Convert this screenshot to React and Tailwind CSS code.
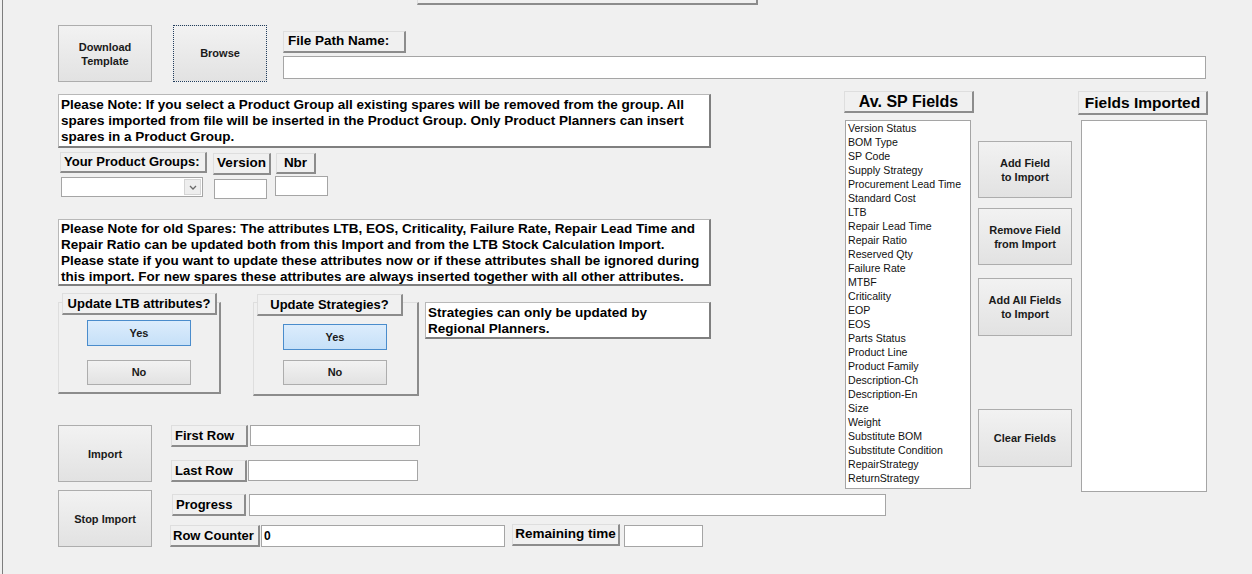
import React from "react";

const spFields = [
  "Version Status",
  "BOM Type",
  "SP Code",
  "Supply Strategy",
  "Procurement Lead Time",
  "Standard Cost",
  "LTB",
  "Repair Lead Time",
  "Repair Ratio",
  "Reserved Qty",
  "Failure Rate",
  "MTBF",
  "Criticality",
  "EOP",
  "EOS",
  "Parts Status",
  "Product Line",
  "Product Family",
  "Description-Ch",
  "Description-En",
  "Size",
  "Weight",
  "Substitute BOM",
  "Substitute Condition",
  "RepairStrategy",
  "ReturnStrategy",
];

// raised Access-style label
function Label({ className = "", children }) {
  return (
    <div
      className={`flex items-center shrink-0 bg-[#f0f0f0] border-t border-l border-r-2 border-b-2 border-t-[#dedede] border-l-[#dedede] border-r-[#8c8c8c] border-b-[#8c8c8c] font-bold text-black whitespace-nowrap ${className}`}
    >
      {children}
    </div>
  );
}

function Btn({ className = "", children }) {
  return (
    <button
      type="button"
      className={`flex items-center justify-center shrink-0 text-center border border-[#adadad] bg-linear-to-b from-[#f2f2f2] to-[#e2e2e2] text-[11px] font-bold leading-[14px] text-[#1a1a1a] ${className}`}
    >
      {children}
    </button>
  );
}

function ChoiceBtn({ active, className = "", children }) {
  return (
    <button
      type="button"
      className={`flex items-center justify-center shrink-0 text-[11px] font-bold text-[#1a1a1a] border ${
        active
          ? "border-[#4a8ccc] bg-linear-to-b from-[#dcecfc] to-[#c6e0f8]"
          : "border-[#adadad] bg-linear-to-b from-[#f2f2f2] to-[#e2e2e2]"
      } ${className}`}
    >
      {children}
    </button>
  );
}

function Box({ className = "", children }) {
  return (
    <div className={`shrink-0 bg-white border border-[#a5a5a5] ${className}`}>
      {children}
    </div>
  );
}

function Note({ className = "", children }) {
  return (
    <div
      className={`shrink-0 bg-white border-t border-l border-r-2 border-b-2 border-t-[#b8b8b8] border-l-[#b8b8b8] border-r-[#7f7f7f] border-b-[#7f7f7f] pl-[2px] text-[13.5px] font-bold leading-[16px] text-black whitespace-nowrap ${className}`}
    >
      {children}
    </div>
  );
}

export default function App() {
  return (
    <div className="w-[1252px] h-[574px] overflow-hidden bg-[#f0f0f0] pl-[2px] font-['Liberation_Sans',Arial,sans-serif] text-black">
      <div className="h-full border-l border-[#7d7d7d]">
        {/* top strip */}
        <div className="ml-[414px] w-[341px] h-[5px] border-l border-r-2 border-b-2 border-l-[#dedede] border-r-[#8c8c8c] border-b-[#8c8c8c]" />

        {/* Row 1 */}
        <div className="flex items-start mt-[20px]">
          <Btn className="ml-[55px] w-[94px] h-[57px]">
            Download
            <br />
            Template
          </Btn>
          <button
            type="button"
            className="ml-[21px] w-[94px] h-[57px] shrink-0 flex items-center justify-center border border-dotted border-[#203c5c] bg-linear-to-b from-[#f2f2f2] to-[#e2e2e2] text-[11px] font-bold text-[#1a1a1a]"
          >
            Browse
          </button>
          <div className="ml-[16px] flex flex-col">
            <Label className="mt-[6px] w-[123px] h-[22px] pl-[4px] text-[13.5px]">File Path Name:</Label>
            <Box className="mt-[3px] w-[923px] h-[23px]" />
          </div>
        </div>

        {/* Main */}
        <div className="flex items-start mt-[9px]">
          {/* Left column */}
          <div className="ml-[55px] w-[653px] shrink-0 flex flex-col">
            <Note className="mt-[3px] h-[54px] pt-[2px]">
              Please Note: If you select a Product Group all existing spares will be removed from the group. All
              <br />
              spares imported from file will be inserted in the Product Group. Only Product Planners can insert
              <br />
              spares in a Product Group.
            </Note>

            {/* product group row */}
            <div className="flex items-start mt-[4px]">
              <div className="ml-[2px] flex flex-col">
                <Label className="w-[147px] h-[21px] pl-[3px] text-[13px]">Your Product Groups:</Label>
                <Box className="mt-[4px] ml-[1px] w-[142px] h-[20px] flex justify-end items-center pr-[1px]">
                  <div className="w-[17px] h-[16px] flex items-center justify-center bg-[#eeeeee] border border-[#d4d4d4]">
                    <svg width="8" height="5" viewBox="0 0 8 5">
                      <path d="M1 1 L4 4 L7 1" fill="none" stroke="#6a6a6a" strokeWidth="1.3" />
                    </svg>
                  </div>
                </Box>
              </div>
              <div className="ml-[6px] mt-[1px] flex flex-col">
                <Label className="w-[58px] h-[22px] justify-center text-[13.5px]">Version</Label>
                <Box className="mt-[4px] ml-[1px] w-[53px] h-[20px]" />
              </div>
              <div className="ml-[5px] mt-[1px] flex flex-col">
                <Label className="w-[40px] h-[21px] justify-center text-[13.5px]">Nbr</Label>
                <Box className="mt-[2px] -ml-[1px] w-[53px] h-[20px]" />
              </div>
            </div>

            <Note className="mt-[20px] h-[67px] pt-[1px]">
              Please Note for old Spares: The attributes LTB, EOS, Criticality, Failure Rate, Repair Lead Time and
              <br />
              Repair Ratio can be updated both from this Import and from the LTB Stock Calculation Import.
              <br />
              Please state if you want to update these attributes now or if these attributes shall be ignored during
              <br />
              this import. For new spares these attributes are always inserted together with all other attributes.
            </Note>

            {/* frames row */}
            <div className="flex items-start mt-[16px]">
              <div className="w-[163px] h-[92px] shrink-0 flex flex-col border-t border-l border-r-2 border-b-2 border-t-[#dedede] border-l-[#dedede] border-r-[#8c8c8c] border-b-[#8c8c8c]">
                <Label className="-mt-[10px] ml-[3px] w-[155px] h-[22px] justify-center text-[13px]">
                  Update LTB attributes?
                </Label>
                <ChoiceBtn active className="mt-[5px] ml-[28px] w-[104px] h-[26px]">Yes</ChoiceBtn>
                <ChoiceBtn className="mt-[14px] ml-[28px] w-[104px] h-[25px]">No</ChoiceBtn>
              </div>
              <div className="ml-[32px] w-[166px] h-[94px] shrink-0 flex flex-col border-t border-l border-r-2 border-b-2 border-t-[#dedede] border-l-[#dedede] border-r-[#8c8c8c] border-b-[#8c8c8c]">
                <Label className="-mt-[9px] ml-[3px] w-[146px] h-[22px] justify-center text-[13px]">
                  Update Strategies?
                </Label>
                <ChoiceBtn active className="mt-[8px] ml-[29px] w-[104px] h-[26px]">Yes</ChoiceBtn>
                <ChoiceBtn className="mt-[10px] ml-[29px] w-[104px] h-[25px]">No</ChoiceBtn>
              </div>
              <Note className="ml-[6px] w-[286px] h-[37px] pt-[2px]">
                Strategies can only be updated by
                <br />
                Regional Planners.
              </Note>
            </div>

            {/* import section */}
            <div className="flex items-start mt-[29px]">
              <div className="flex flex-col">
                <Btn className="w-[94px] h-[57px]">Import</Btn>
                <Btn className="mt-[8px] w-[94px] h-[57px]">Stop Import</Btn>
              </div>
              <div className="flex flex-col">
                <div className="flex items-start">
                  <Label className="ml-[19px] w-[77px] h-[22px] pl-[3px] text-[13px]">First Row</Label>
                  <Box className="ml-[2px] w-[170px] h-[21px]" />
                </div>
                <div className="flex items-start mt-[13px]">
                  <Label className="ml-[19px] w-[76px] h-[22px] pl-[3px] text-[13px]">Last Row</Label>
                  <Box className="ml-[1px] w-[170px] h-[21px]" />
                </div>
                <div className="flex items-start mt-[12px]">
                  <Label className="ml-[20px] w-[74px] h-[22px] pl-[3px] text-[13px]">Progress</Label>
                  <Box className="ml-[3px] w-[637px] h-[22px]" />
                </div>
                <div className="flex items-start mt-[8px]">
                  <Label className="ml-[18px] mt-[1px] w-[90px] h-[22px] pl-[2px] text-[13px]">Row Counter</Label>
                  <Box className="ml-[1px] mt-[1px] w-[244px] h-[22px] pl-[2px] text-[12px] font-bold leading-[20px]">0</Box>
                  <Label className="ml-[7px] w-[108px] h-[22px] justify-center text-[13.5px]">Remaining time</Label>
                  <Box className="ml-[4px] mt-[1px] w-[79px] h-[22px]" />
                </div>
              </div>
            </div>
          </div>

          {/* Right part */}
          <div className="ml-[133px] flex items-start">
            <div className="w-[130px] flex flex-col">
              <Label className="w-[130px] h-[22px] justify-center text-[16px]">Av. SP Fields</Label>
              <Box className="mt-[7px] ml-[1px] w-[126px] h-[369px] pl-[2px] text-[10.6px] leading-[14px] text-[#111]">
                {spFields.map((f) => (
                  <div key={f} className="whitespace-nowrap">{f}</div>
                ))}
              </Box>
            </div>
            <div className="ml-[4px] flex flex-col">
              <Btn className="mt-[50px] w-[94px] h-[57px]">
                Add Field
                <br />
                to Import
              </Btn>
              <Btn className="mt-[10px] w-[94px] h-[57px]">
                Remove Field
                <br />
                from Import
              </Btn>
              <Btn className="mt-[13px] w-[94px] h-[58px]">
                Add All Fields
                <br />
                to Import
              </Btn>
              <Btn className="mt-[73px] w-[94px] h-[58px]">Clear Fields</Btn>
            </div>
            <div className="ml-[6px] flex flex-col">
              <Label className="w-[130px] h-[24px] justify-center text-[15.5px]">Fields Imported</Label>
              <Box className="mt-[5px] ml-[3px] w-[126px] h-[372px]" />
            </div>
          </div>
        </div>
      </div>
    </div>
  );
}
